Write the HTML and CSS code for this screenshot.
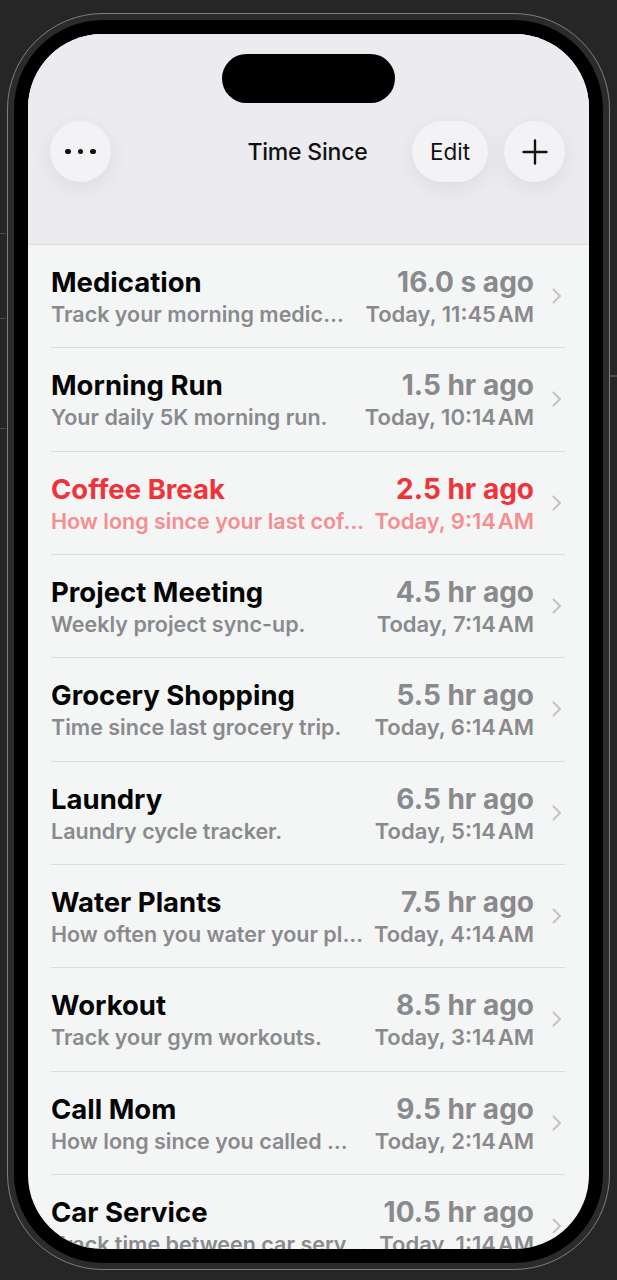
FILE: index.html
```html
<!DOCTYPE html>
<html lang="en">
<head>
<meta charset="utf-8">
<title>Time Since</title>
<link rel="stylesheet" href="styles.css">
</head>
<body>
<div class="device">
  <div class="bezel">
    <div class="screen">
      <header class="header">
        <div class="island"></div>
        <nav class="navbar">
          <div class="nav-left">
            <button class="glass circle dots" aria-label="More"><span></span><span></span><span></span></button>
          </div>
          <h1 class="title">Time Since</h1>
          <div class="nav-right">
            <button class="glass pill">Edit</button>
            <button class="glass circle" aria-label="Add">
              <svg class="plus" width="26" height="26" viewBox="0 0 26 26"><path d="M13 1.5V24.5M1.5 13H24.5" fill="none" stroke="#111" stroke-width="2.4" stroke-linecap="round"/></svg>
            </button>
          </div>
        </nav>
      </header>
      <ul class="list">
        <li class="row">
          <div class="left"><div class="name">Medication</div><div class="desc">Track your morning medication.</div></div>
          <div class="right"><div class="ago">16.0 s ago</div><div class="when">Today, 11:45&#8202;AM</div></div>
          <svg class="chev" width="10" height="16" viewBox="0 0 10 16"><path d="M1.5 1.5L8 8L1.5 14.5" fill="none" stroke="#c4c4c7" stroke-width="2" stroke-linecap="round" stroke-linejoin="round"/></svg>
        </li>
        <li class="row">
          <div class="left"><div class="name">Morning Run</div><div class="desc">Your daily 5K morning run.</div></div>
          <div class="right"><div class="ago">1.5 hr ago</div><div class="when">Today, 10:14&#8202;AM</div></div>
          <svg class="chev" width="10" height="16" viewBox="0 0 10 16"><path d="M1.5 1.5L8 8L1.5 14.5" fill="none" stroke="#c4c4c7" stroke-width="2" stroke-linecap="round" stroke-linejoin="round"/></svg>
        </li>
        <li class="row alert">
          <div class="left"><div class="name">Coffee Break</div><div class="desc">How long since your last coffee?</div></div>
          <div class="right"><div class="ago">2.5 hr ago</div><div class="when">Today, 9:14&#8202;AM</div></div>
          <svg class="chev" width="10" height="16" viewBox="0 0 10 16"><path d="M1.5 1.5L8 8L1.5 14.5" fill="none" stroke="#c4c4c7" stroke-width="2" stroke-linecap="round" stroke-linejoin="round"/></svg>
        </li>
        <li class="row">
          <div class="left"><div class="name">Project Meeting</div><div class="desc">Weekly project sync-up.</div></div>
          <div class="right"><div class="ago">4.5 hr ago</div><div class="when">Today, 7:14&#8202;AM</div></div>
          <svg class="chev" width="10" height="16" viewBox="0 0 10 16"><path d="M1.5 1.5L8 8L1.5 14.5" fill="none" stroke="#c4c4c7" stroke-width="2" stroke-linecap="round" stroke-linejoin="round"/></svg>
        </li>
        <li class="row">
          <div class="left"><div class="name">Grocery Shopping</div><div class="desc">Time since last grocery trip.</div></div>
          <div class="right"><div class="ago">5.5 hr ago</div><div class="when">Today, 6:14&#8202;AM</div></div>
          <svg class="chev" width="10" height="16" viewBox="0 0 10 16"><path d="M1.5 1.5L8 8L1.5 14.5" fill="none" stroke="#c4c4c7" stroke-width="2" stroke-linecap="round" stroke-linejoin="round"/></svg>
        </li>
        <li class="row">
          <div class="left"><div class="name">Laundry</div><div class="desc">Laundry cycle tracker.</div></div>
          <div class="right"><div class="ago">6.5 hr ago</div><div class="when">Today, 5:14&#8202;AM</div></div>
          <svg class="chev" width="10" height="16" viewBox="0 0 10 16"><path d="M1.5 1.5L8 8L1.5 14.5" fill="none" stroke="#c4c4c7" stroke-width="2" stroke-linecap="round" stroke-linejoin="round"/></svg>
        </li>
        <li class="row">
          <div class="left"><div class="name">Water Plants</div><div class="desc">How often you water your plants.</div></div>
          <div class="right"><div class="ago">7.5 hr ago</div><div class="when">Today, 4:14&#8202;AM</div></div>
          <svg class="chev" width="10" height="16" viewBox="0 0 10 16"><path d="M1.5 1.5L8 8L1.5 14.5" fill="none" stroke="#c4c4c7" stroke-width="2" stroke-linecap="round" stroke-linejoin="round"/></svg>
        </li>
        <li class="row">
          <div class="left"><div class="name">Workout</div><div class="desc">Track your gym workouts.</div></div>
          <div class="right"><div class="ago">8.5 hr ago</div><div class="when">Today, 3:14&#8202;AM</div></div>
          <svg class="chev" width="10" height="16" viewBox="0 0 10 16"><path d="M1.5 1.5L8 8L1.5 14.5" fill="none" stroke="#c4c4c7" stroke-width="2" stroke-linecap="round" stroke-linejoin="round"/></svg>
        </li>
        <li class="row">
          <div class="left"><div class="name">Call Mom</div><div class="desc">How long since you called Mom?</div></div>
          <div class="right"><div class="ago">9.5 hr ago</div><div class="when">Today, 2:14&#8202;AM</div></div>
          <svg class="chev" width="10" height="16" viewBox="0 0 10 16"><path d="M1.5 1.5L8 8L1.5 14.5" fill="none" stroke="#c4c4c7" stroke-width="2" stroke-linecap="round" stroke-linejoin="round"/></svg>
        </li>
        <li class="row">
          <div class="left"><div class="name">Car Service</div><div class="desc">Track time between car services.</div></div>
          <div class="right"><div class="ago">10.5 hr ago</div><div class="when">Today, 1:14&#8202;AM</div></div>
          <svg class="chev" width="10" height="16" viewBox="0 0 10 16"><path d="M1.5 1.5L8 8L1.5 14.5" fill="none" stroke="#c4c4c7" stroke-width="2" stroke-linecap="round" stroke-linejoin="round"/></svg>
        </li>
      </ul>
    </div>
  </div>
</div>
</body>
</html>
```

FILE: styles.css
```css
* { box-sizing: border-box; }

html, body {
  margin: 0;
  padding: 0;
}

body {
  width: 617px;
  height: 1280px;
  overflow: hidden;
  background-color: #262626;
  background-image:
    linear-gradient(#4a4a4a, #4a4a4a),
    linear-gradient(#4a4a4a, #4a4a4a),
    linear-gradient(#4a4a4a, #4a4a4a),
    linear-gradient(#4a4a4a, #4a4a4a);
  background-repeat: no-repeat;
  background-size: 6px 1px, 6px 1px, 6px 1px, 7px 2px;
  background-position: 0 233px, 0 318px, 0 428px, 610px 375px;
  font-family: Inter, "Noto Sans", "Liberation Sans", sans-serif;
  padding: 13px 0 0 7px;
}

.device {
  width: 603px;
  height: 1257px;
  border: 1px solid #7e7e7e;
  border-radius: 96px;
  background: #2b2b2b;
  padding: 6px;
}

.bezel {
  width: 100%;
  height: 100%;
  background: #000;
  border-radius: 89px;
  padding: 14px;
}

.screen {
  width: 100%;
  height: 100%;
  border-radius: 74px;
  overflow: hidden;
  background: #f4f5f5;
}

.header {
  height: 211px;
  background: #ebebf0;
  border-bottom: 1px solid #dedee2;
  padding-top: 20px;
}

.island {
  width: 173px;
  height: 49px;
  margin: 0 auto;
  background: #000;
  border-radius: 25px;
}

.navbar {
  margin-top: 18px;
  padding: 0 24px 0 22px;
  display: grid;
  grid-template-columns: 1fr auto 1fr;
  align-items: center;
  height: 60px;
}

.nav-left { justify-self: start; }

.nav-right {
  justify-self: end;
  display: flex;
  gap: 16px;
}

.title {
  margin: 0;
  font-size: 23px;
  font-weight: 500;
  color: #111;
  letter-spacing: -0.2px;
}

.glass {
  border: 0;
  height: 61px;
  background: #f3f3f6;
  border-radius: 31px;
  box-shadow: 0 6px 22px rgba(0, 0, 0, 0.07);
  display: flex;
  align-items: center;
  justify-content: center;
  font-family: inherit;
  padding: 0;
}

.circle { width: 61px; }

.pill {
  width: 76px;
  font-size: 22.5px;
  font-weight: 400;
  color: #111;
}

.dots { gap: 7px; }

.dots span {
  width: 5.5px;
  height: 5.5px;
  border-radius: 50%;
  background: #111;
}

.list {
  list-style: none;
  margin: 0;
  padding: 0;
}

.row {
  height: 103.33px;
  margin: 0 24px 0 23px;
  border-bottom: 1px solid #dcdcde;
  display: flex;
  align-items: center;
}

.left {
  flex: 1 1 auto;
  min-width: 0;
  margin-top: 4px;
}

.right {
  flex: 0 0 auto;
  margin-left: 10px;
  margin-top: 4px;
  text-align: right;
  color: #8a8a8e;
}

.name {
  font-size: 27.5px;
  font-weight: 700;
  line-height: 32px;
  color: #050505;
  white-space: nowrap;
  overflow: hidden;
  text-overflow: ellipsis;
}

.desc {
  margin-top: 1px;
  font-size: 21.5px;
  font-weight: 600;
  line-height: 31px;
  color: #8a8a8e;
  white-space: nowrap;
  overflow: hidden;
  text-overflow: ellipsis;
}

.ago {
  font-size: 28px;
  font-weight: 700;
  line-height: 32px;
  white-space: nowrap;
}

.when {
  margin-top: 1px;
  font-size: 22px;
  font-weight: 600;
  line-height: 31px;
  white-space: nowrap;
}

.chev {
  flex: 0 0 auto;
  margin: 0 3px 0 18px;
}

.alert .name,
.alert .ago { color: #f0333a; }

.alert .desc,
.alert .when { color: #f68d91; }
```
